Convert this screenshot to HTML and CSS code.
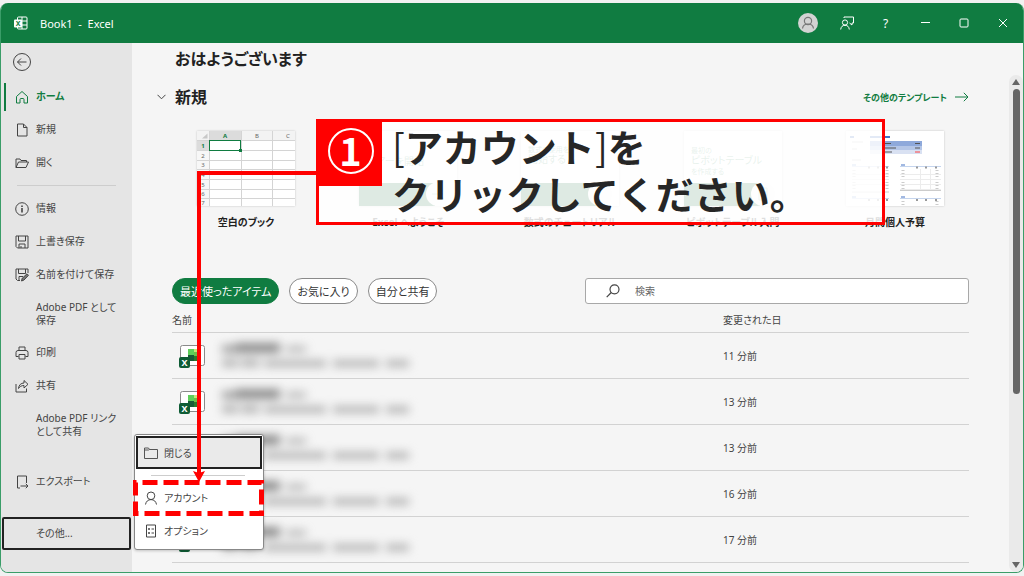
FILE: index.html
```html
<!DOCTYPE html>
<html lang="ja">
<head>
    <meta charset="UTF-8">
    <meta name="viewport" content="width=device-width, initial-scale=1.0">
    <title>Book1 - Excel</title>
    <link rel="stylesheet" href="styles.css">
</head>
<body>
    <!-- Shared symbols for the file list -->
    <svg class="defs" aria-hidden="true">
        <symbol id="file-icon" viewBox="0 0 28 26">
            <rect x="1.5" y="2.5" width="24" height="20" rx="2" fill="#fff" stroke="#8a8a8a"/>
            <rect x="9" y="6" width="6" height="6" fill="#5fcf5a"/>
            <rect x="15" y="6" width="5" height="3" fill="#c5e87a"/>
            <rect x="15" y="9" width="5" height="4" fill="#6fbf4a"/>
            <rect x="9" y="12" width="6" height="6" fill="#185c37"/>
            <rect x="15" y="13" width="5" height="5" fill="#2c7a2c"/>
            <rect x="0" y="14" width="11" height="11" rx="2" fill="#0f5c35"/>
            <text x="5.500" y="23" text-anchor="middle" class="icon-x">X</text>
        </symbol>
        <symbol id="hidden-name" viewBox="0 0 200 34">
            <g fill="#8c8c8c">
                <rect x="6" y="6" width="14" height="8" opacity=".8"/>
                <rect x="20" y="4" width="44" height="10"/>
                <rect x="70" y="7" width="20" height="6" opacity=".6"/>
            </g>
            <g fill="#b4b4b4">
                <rect x="6" y="20" width="16" height="8"/>
                <rect x="25" y="20" width="18" height="8"/>
                <rect x="48" y="21" width="62" height="7"/>
                <rect x="117" y="21" width="46" height="7"/>
                <rect x="170" y="21" width="23" height="7"/>
            </g>
        </symbol>
    </svg>

    <div class="window">
        <header class="titlebar">
            <svg class="app-icon" width="14" height="14" viewBox="0 0 14 14" fill="none" stroke="#fff">
                <path d="M3.500 4V2a1 1 0 0 1 1-1H12a1 1 0 0 1 1 1v10a1 1 0 0 1-1 1H4.500a1 1 0 0 1-1-1v-1M8 1v12M3.500 5H13M8 9h5"/>
                <rect x="0" y="3.500" width="8" height="8" rx="1" fill="#fff" stroke="none"/>
                <text x="4" y="10" text-anchor="middle" class="app-x">X</text>
            </svg>
            <span class="title">Book1&nbsp; -&nbsp; Excel</span>
            <div class="window-buttons">
                <button aria-label="アカウント">
                    <svg width="20" height="20" viewBox="0 0 20 20" fill="none" stroke="#777" stroke-width="1.200">
                        <circle cx="10" cy="10" r="10" fill="#d3d3d3" stroke="none"/>
                        <circle cx="10" cy="8" r="3.600"/>
                        <path d="M4.500 15.500c.4-3 2.300-4.500 5.500-4.500s5.100 1.500 5.500 4.500"/>
                    </svg>
                </button>
                <button aria-label="フィードバック">
                    <svg width="14" height="14" viewBox="0 0 14 14" fill="none" stroke="#fff">
                        <circle cx="5" cy="6.500" r="2.600"/>
                        <path d="M.7 13.500c.3-2.800 1.800-4.200 4.300-4.200s4 1.400 4.300 4.200M4 2V1h9.500v6H12v2L9.500 7"/>
                    </svg>
                </button>
                <button aria-label="ヘルプ">?</button>
                <button aria-label="最小化">
                    <svg width="10" height="10" viewBox="0 0 10 10" stroke="#fff"><path d="M1 4.500h9"/></svg>
                </button>
                <button aria-label="最大化">
                    <svg width="10" height="10" viewBox="0 0 10 10" fill="none" stroke="#fff"><rect x="1" y="1" width="8" height="8" rx="1"/></svg>
                </button>
                <button aria-label="閉じる">
                    <svg width="10" height="10" viewBox="0 0 10 10" stroke="#fff"><path d="M1 1l8 8M9 1L1 9"/></svg>
                </button>
            </div>
        </header>

        <div class="body">
            <nav class="sidebar">
                <button class="back" aria-label="戻る">
                    <svg width="20" height="20" viewBox="0 0 20 20" fill="none" stroke="#444">
                        <circle cx="10" cy="10" r="8.500"/>
                        <path d="M5.500 10h9M9 6.500L5.500 10 9 13.500"/>
                    </svg>
                </button>
                <button class="nav-item active">
                    <svg width="14" height="14" viewBox="0 0 14 14" fill="none" stroke="#107c41">
                        <path d="M1.500 6.500L7 1.500l5.500 5v6.500H9V9.500a1 1 0 0 0-1-1H6a1 1 0 0 0-1 1V13H1.500z"/>
                    </svg>
                    ホーム
                </button>
                <button class="nav-item">
                    <svg width="14" height="14" viewBox="0 0 14 14" fill="none" stroke="#444">
                        <path d="M2.500 1h6l3.500 3.500V13H2.500zM8.500 1v3.500H12"/>
                    </svg>
                    新規
                </button>
                <button class="nav-item">
                    <svg width="14" height="14" viewBox="0 0 14 14" fill="none" stroke="#444">
                        <path d="M1 11.500V3h4l1 1.500h5.500V6M1 11.500L3.500 6h10L11 11.500z"/>
                    </svg>
                    開く
                </button>
                <hr>
                <button class="nav-item">
                    <svg width="14" height="14" viewBox="0 0 14 14" fill="none" stroke="#444">
                        <circle cx="7" cy="7" r="6.300"/>
                        <path d="M7 6v4.500M7 3.500v1.500" stroke-width="1.600"/>
                    </svg>
                    情報
                </button>
                <button class="nav-item">
                    <svg width="14" height="14" viewBox="0 0 14 14" fill="none" stroke="#444">
                        <path d="M1 1h12v12H2.500L1 11.500zM3.500 1v5h7V1M4 13V9h6v4M6 11v2"/>
                    </svg>
                    上書き保存
                </button>
                <button class="nav-item">
                    <svg width="14" height="14" viewBox="0 0 14 14" fill="none" stroke="#444">
                        <path d="M5 12.500H2.500L1 11V1h12v4M3.500 1v4.500h7V1M4 12V8.500h4"/>
                        <path d="M6.500 13l.7-2.700L12 5.800l1.500 1.500-4.600 4.800z" fill="#777"/>
                    </svg>
                    名前を付けて保存
                </button>
                <button class="nav-item tall">Adobe PDF として<br>保存</button>
                <button class="nav-item">
                    <svg width="14" height="14" viewBox="0 0 14 14" fill="none" stroke="#444">
                        <path d="M4 4.500V1h6v3.500M3.500 10.500H1v-4a2 2 0 0 1 2-2h8a2 2 0 0 1 2 2v4h-2.500M4 8.500h6V13H4z"/>
                    </svg>
                    印刷
                </button>
                <button class="nav-item">
                    <svg width="14" height="14" viewBox="0 0 14 14" fill="none" stroke="#444">
                        <path d="M1 5v8h10.500V9.500M3.500 9.500c.3-3.500 2.500-5.500 5.500-5.500V1.500l4 3.800-4 3.700V6.500c-2.500 0-4.300 1-5.500 3z"/>
                    </svg>
                    共有
                </button>
                <button class="nav-item tall">Adobe PDF リンク<br>として共有</button>
                <button class="nav-item export">
                    <svg width="14" height="14" viewBox="0 0 14 14" fill="none" stroke="#444">
                        <path d="M5 13H2.500V1h9v7M5.500 11H13M10.800 8.800L13 11l-2.200 2.200"/>
                    </svg>
                    エクスポート
                </button>
                <div class="more">
                    <button class="nav-item more-button">その他...</button>
                    <div class="menu">
                        <button class="menu-item selected">
                            <svg width="14" height="14" viewBox="0 0 14 14" fill="none" stroke="#555">
                                <path d="M.5 2h4l1 1.500h8v9H.5zM.5 4h4l1-.5"/>
                            </svg>
                            閉じる
                        </button>
                        <hr>
                        <button class="menu-item">
                            <svg width="14" height="14" viewBox="0 0 14 14" fill="none" stroke="#444">
                                <circle cx="7" cy="4.800" r="3.800"/>
                                <path d="M1.500 13.500C2 10.500 4 8.600 7 8.600s5 1.900 5.500 4.900"/>
                            </svg>
                            アカウント
                        </button>
                        <button class="menu-item">
                            <svg width="14" height="14" viewBox="0 0 14 14" fill="none" stroke="#444">
                                <path d="M2.500 1h9v12h-9z"/>
                                <path d="M4 5h2M4 9h2M5 4v2M5 8v2M7.500 5H10M7.500 9H10"/>
                            </svg>
                            オプション
                        </button>
                    </div>
                </div>
            </nav>

            <main class="content">
                <h1>おはようございます</h1>
                <div class="section-head">
                    <button class="toggle" aria-label="新規を折りたたむ">
                        <svg width="9" height="6" viewBox="0 0 9 6" fill="none" stroke="#444"><path d="M.5 .8l4 4 4-4"/></svg>
                    </button>
                    <h2>新規</h2>
                    <a class="more-templates" href="#">その他のテンプレート
                        <svg width="14" height="10" viewBox="0 0 14 10" fill="none" stroke="#107c41"><path d="M0 5h13M8.800 .8L13 5 8.800 9.200"/></svg>
                    </a>
                </div>

                <div class="templates">
                    <a class="template" href="#">
                        <svg class="thumb" viewBox="0 0 98 75">
                            <path d="M0 0h98v9H0z" fill="#f3f3f3"/>
                            <path d="M0 9h12v66H0z" fill="#f7f7f7"/>
                            <path d="M12 0h32v9H12z" fill="#dcdcdc"/>
                            <path d="M0 9h12v10H0z" fill="#dcdcdc"/>
                            <path d="M5 7.500h5.500V2.500z" fill="#c8c8c8"/>
                            <path d="M0 9.500h98M0 19.500h98M0 29.500h98M0 38.500h98M0 48.500h98M0 58.500h98M0 67.500h98M12.500 0v75M44.500 0v75M75.500 0v75" stroke="#d4d4d4"/>
                            <rect x="12.500" y="9.500" width="31" height="10" fill="#fff" stroke="#107c41"/>
                            <rect x="42" y="18" width="3" height="3" fill="#107c41"/>
                            <g class="cell-labels" text-anchor="middle">
                                <text x="28" y="7" class="on">A</text>
                                <text x="60" y="7">B</text>
                                <text x="91" y="7">C</text>
                                <text x="6" y="17" class="on">1</text>
                                <text x="6" y="27">2</text>
                                <text x="6" y="36">3</text>
                                <text x="6" y="46">4</text>
                                <text x="6" y="56">5</text>
                                <text x="6" y="65">6</text>
                                <text x="6" y="74">7</text>
                            </g>
                        </svg>
                        <span>空白のブック</span>
                    </a>
                    <a class="template" href="#">
                        <svg class="thumb" viewBox="0 0 98 75">
                            <path d="M0 52h76v23H0z" fill="#217346"/>
                            <circle cx="79" cy="63" r="12" fill="#f5f5f5"/>
                            <path d="M73 63h11M80 59l4 4-4 4" fill="none" stroke="#9fc5b0"/>
                            <text x="8" y="34" class="cover-text">ツアーを開始</text>
                        </svg>
                        <span>Excel へようこそ</span>
                    </a>
                    <a class="template" href="#">
                        <svg class="thumb" viewBox="0 0 98 75">
                            <path d="M0 52h76v23H0z" fill="#217346"/>
                            <circle cx="79" cy="63" r="12" fill="#f5f5f5"/>
                            <text x="7" y="21" class="cover-small">数式の使用を</text>
                            <text x="7" y="32" class="cover-text">開始する</text>
                        </svg>
                        <span>数式のチュートリアル</span>
                    </a>
                    <a class="template" href="#">
                        <svg class="thumb" viewBox="0 0 98 75">
                            <path d="M0 52h76v23H0z" fill="#217346"/>
                            <circle cx="79" cy="63" r="12" fill="#f5f5f5"/>
                            <path d="M75 57h8v12h-8zM75 61h8M79 57v12" fill="none" stroke="#9fc5b0"/>
                            <text x="7" y="22" class="cover-small">最初の</text>
                            <text x="7" y="33" class="cover-text">ピボットテーブル</text>
                            <text x="7" y="43" class="cover-small">を作成する</text>
                        </svg>
                        <span>ピボットテーブル入門</span>
                    </a>
                    <a class="template" href="#">
                        <svg class="thumb" viewBox="0 0 98 75">
                            <path d="M4 6h4M24 6h20" stroke="#4472c4" stroke-width="2"/>
                            <path d="M24 10h52v5H24z" fill="#8ea9db"/>
                            <path d="M24 15h52v4H24z" fill="#b4c6e7"/>
                            <path d="M24 19h52v4H24z" fill="#d9e1f2"/>
                            <path d="M38 12.500h7M38 17h12M38 21h8M69 12.500h5M69 17h5" stroke="#555"/>
                            <path d="M69 21h5" stroke="#f44"/>
                            <path d="M6 11h11M6 18h5M6 29h9" stroke="#bbb"/>
                            <path d="M6 34h4M55 34h4M6 66h4M55 66h4" stroke="#4472c4"/>
                            <path d="M6 35.500h37M54 35.500h41M6 67.500h37M54 67.500h41" stroke="#c5d5ee"/>
                            <path d="M22 36.500h2M31 36.500h2M40 36.500h2M70 36.500h2M79 36.500h2M89 36.500h2M22 69h2M31 69h2M40 69h2M70 69h2M79 69h2M89 69h2" stroke="#999" stroke-width="2"/>
                            <path d="M8 39v19M41 39v21M57 39v20M91 39v20M57 70v5M91 70v5" stroke="#ccc" stroke-width="3" stroke-dasharray="1 2"/>
                            <path d="M6 43.500h37M6 48.500h37M6 53.500h37M54 43.500h41M54 48.500h41M54 53.500h41M54 58.500h41M74.500 38v21M84.500 38v21" stroke="#ececec"/>
                            <path d="M6 61h37M54 59.500h41" stroke="#ccc"/>
                        </svg>
                        <span>月間個人予算</span>
                    </a>
                </div>

                <div class="toolbar">
                    <button class="pill current">最近使ったアイテム</button>
                    <button class="pill">お気に入り</button>
                    <button class="pill">自分と共有</button>
                    <label class="search">
                        <svg width="14" height="14" viewBox="0 0 14 14" fill="none" stroke="#444" stroke-width="1.200">
                            <circle cx="8.500" cy="5.300" r="4.500"/>
                            <path d="M5.300 8.500L.7 13.200"/>
                        </svg>
                        <input type="search" placeholder="検索" aria-label="検索">
                    </label>
                </div>

                <table class="files">
                    <thead>
                        <tr><th>名前</th><th class="date">変更された日</th></tr>
                    </thead>
                    <tbody>
                        <tr>
                            <td><div class="file"><svg class="file-icon"><use href="#file-icon"/></svg><svg class="hidden-name"><use href="#hidden-name"/></svg></div></td>
                            <td>11 分前</td>
                        </tr>
                        <tr>
                            <td><div class="file"><svg class="file-icon"><use href="#file-icon"/></svg><svg class="hidden-name"><use href="#hidden-name"/></svg></div></td>
                            <td>13 分前</td>
                        </tr>
                        <tr>
                            <td><div class="file"><svg class="file-icon"><use href="#file-icon"/></svg><svg class="hidden-name"><use href="#hidden-name"/></svg></div></td>
                            <td>13 分前</td>
                        </tr>
                        <tr>
                            <td><div class="file"><svg class="file-icon"><use href="#file-icon"/></svg><svg class="hidden-name"><use href="#hidden-name"/></svg></div></td>
                            <td>16 分前</td>
                        </tr>
                        <tr>
                            <td><div class="file"><svg class="file-icon"><use href="#file-icon"/></svg><svg class="hidden-name"><use href="#hidden-name"/></svg></div></td>
                            <td>17 分前</td>
                        </tr>
                    </tbody>
                </table>
            </main>

            <div class="scrollbar">
                <svg width="8" height="6" viewBox="0 0 8 6"><path d="M4 0l4 6H0z" fill="#666"/></svg>
                <div class="scroll-space"><div class="scroll-thumb"></div></div>
                <svg width="8" height="6" viewBox="0 0 8 6"><path d="M0 0h8L4 6z" fill="#666"/></svg>
            </div>
        </div>
    </div>

    <!-- Step callout and its arrow -->
    <div class="callout">
        <div class="step"><span>1</span></div>
        <p><span class="bracket">[</span>アカウント<span class="bracket">]</span>を<br>クリックしてください。</p>
    </div>
    <svg class="arrow" width="124" height="314" viewBox="0 0 124 314">
        <path d="M124 4H7v302" fill="none" stroke="#f00" stroke-width="4"/>
        <path d="M7 313L1 302l6 2 6-2z" fill="#f00"/>
    </svg>
    <svg class="highlight" width="132" height="36" viewBox="0 0 132 36">
        <rect x="2.500" y="2.500" width="126" height="31" fill="none" stroke="#f00" stroke-width="5" stroke-dasharray="15 6" stroke-dashoffset="14"/>
    </svg>
</body>
</html>
```
FILE: styles.css
```css
* {
    box-sizing: border-box;
}

body {
    margin: 0;
    padding: 3px 0;
    min-height: 100vh;
    display: flex;
    flex-direction: column;
    position: relative;
    background: #f1f1f1;
    color: #444;
    font-family: "Noto Sans", "Noto Sans CJK JP", sans-serif;
    font-size: 10px;
    font-feature-settings: "palt";
}

button {
    font: inherit;
    color: inherit;
    background: none;
    border: none;
    padding: 0;
    cursor: pointer;
}

svg {
    flex-shrink: 0;
}

a {
    color: inherit;
    text-decoration: none;
}

hr {
    border: none;
    border-top: 1px solid #cdcdcd;
}

.defs {
    position: absolute;
    width: 0;
    height: 0;
}

.window {
    flex: 1;
    display: flex;
    flex-direction: column;
    border: 1px solid #3a9d68;
    border-top: none;
    border-radius: 8px;
    background: #f5f5f5;
}

/* Title bar */
.titlebar {
    display: flex;
    align-items: center;
    height: 40px;
    padding: 0 1px 0 13px;
    background: #107c41;
    color: #fff;
    border-radius: 7px 7px 0 0;
    font-size: 11px;
}

.title {
    margin-left: 12px;
}

.app-x {
    font-size: 7px;
    font-weight: bold;
    fill: #107c41;
    stroke: none;
}

.window-buttons {
    display: flex;
    margin-left: auto;
}

.window-buttons button {
    width: 39px;
    height: 40px;
    display: flex;
    align-items: center;
    justify-content: center;
    font-size: 12px;
}

.body {
    flex: 1;
    display: flex;
}

/* Sidebar */
.sidebar {
    width: 131px;
    display: flex;
    flex-direction: column;
    background: #e5e5e5;
    border-radius: 0 0 0 7px;
}

.sidebar hr {
    width: 99px;
    margin: 6px 16px;
}

.back {
    height: 37px;
    padding-left: 11px;
    display: flex;
    align-items: center;
}

.nav-item {
    display: flex;
    align-items: center;
    gap: 7px;
    height: 33px;
    padding-left: 14px;
    line-height: 13px;
    text-align: left;
}

.nav-item.active {
    color: #107c41;
    font-weight: bold;
}

.nav-item.active::before {
    content: "";
    width: 2px;
    height: 28px;
    margin: 0 2px 0 -11px;
    background: #107c41;
}

.nav-item.tall {
    height: 45px;
    padding-left: 35px;
}

.nav-item.export {
    margin-top: 18px;
}

.more {
    position: relative;
    margin: 19px 1px 0;
}

.more-button {
    width: 100%;
    padding-left: 32px;
    border: 2px solid #222;
    border-radius: 2px;
}

.menu {
    position: absolute;
    left: calc(100% + 3px);
    bottom: 0;
    width: 130px;
    z-index: 2;
    display: flex;
    flex-direction: column;
    padding: 1px 1px 2px;
    background: #fff;
    border: 1px solid #888;
    border-radius: 3px;
    box-shadow: 0 1px 3px rgba(0, 0, 0, 0.2);
}

.menu hr {
    width: 94px;
    margin: 6px auto 5px 15px;
}

.menu-item {
    display: flex;
    align-items: center;
    gap: 6px;
    height: 33px;
    padding-left: 8px;
}

.menu-item.selected {
    padding-left: 6px;
    background: #eaeaea;
    border: 2px solid #222;
}

/* Main area */
.content {
    flex: 1;
    padding: 0 40px;
}

h1,
h2 {
    margin: 0;
    color: #222;
    font-size: 16px;
    line-height: 32px;
}

h1 {
    padding-left: 3px;
}

.section-head {
    display: flex;
    align-items: center;
    gap: 9px;
    margin: 6px 0 18px -15px;
}

.toggle {
    display: flex;
}

.more-templates {
    display: flex;
    align-items: center;
    gap: 8px;
    margin-left: auto;
    color: #107c41;
    font-size: 9px;
    font-weight: bold;
}

.templates {
    display: grid;
    grid-template-columns: repeat(5, 1fr);
    margin: 0 -7px;
}

.template {
    display: flex;
    flex-direction: column;
    align-items: center;
    gap: 8px;
    color: #222;
    font-weight: bold;
    line-height: 16px;
}

.thumb {
    width: 98px;
    height: 75px;
    background: #fff;
    box-shadow: 0 0 2px rgba(0, 0, 0, 0.2);
}

.cell-labels {
    font-size: 6px;
    font-weight: normal;
    fill: #666;
}

.cell-labels .on {
    font-weight: bold;
    fill: #107c41;
}

.cover-text,
.cover-small {
    font-weight: normal;
    fill: #6ba585;
}

.cover-text {
    font-size: 10px;
}

.cover-small {
    font-size: 7px;
}

.toolbar {
    display: flex;
    gap: 10px;
    margin-top: 48px;
}

.pill {
    height: 26px;
    padding: 0 7px;
    border: 1px solid #8a8a8a;
    border-radius: 13px;
    background: #fff;
    color: #333;
    font-size: 11px;
}

.pill.current {
    background: #107c41;
    border-color: #107c41;
    color: #fff;
}

.search {
    display: flex;
    align-items: center;
    gap: 15px;
    width: 384px;
    height: 26px;
    margin-left: auto;
    padding-left: 20px;
    background: #fff;
    border: 1px solid #a8a8a8;
    border-radius: 3px;
}

.search input {
    flex: 1;
    border: none;
    outline: none;
    padding: 0;
    background: none;
    font: inherit;
}

.search input::placeholder {
    color: #666;
}

/* File list */
.files {
    width: 100%;
    border-collapse: separate;
    border-spacing: 0;
}

.files th {
    height: 29px;
    padding: 3px 0 0;
    font-weight: normal;
    text-align: left;
    border-bottom: 1px solid #d2d2d2;
}

.files .date {
    width: 246px;
}

.files td {
    height: 46px;
    padding: 0;
    border-bottom: 1px solid #d2d2d2;
}

.file {
    display: flex;
    align-items: center;
    gap: 9px;
    padding-left: 7px;
}

.file-icon {
    width: 28px;
    height: 26px;
}

.icon-x {
    font-size: 9px;
    font-weight: bold;
    fill: #fff;
}

.hidden-name {
    width: 200px;
    height: 34px;
    filter: blur(5px);
}

/* Scrollbar */
.scrollbar {
    display: flex;
    flex-direction: column;
    align-items: center;
    gap: 4px;
    width: 14px;
    margin-top: 32px;
    padding: 4px 0;
    background: #eaeaea;
    border-radius: 7px;
}

.scroll-space {
    flex: 1;
}

.scroll-thumb {
    width: 7px;
    height: 65%;
    background: #666;
    border-radius: 4px;
}

/* Annotation layer */
.callout {
    position: absolute;
    left: 316px;
    top: 119px;
    z-index: 3;
    display: flex;
    width: 569px;
    height: 106px;
    border: 3px solid #f00;
    background: rgba(255, 255, 255, 0.85);
    color: #262626;
}

.step {
    display: flex;
    justify-content: center;
    width: 63px;
    height: 64px;
    padding-top: 6px;
    background: #f00;
}

.step span {
    width: 46px;
    height: 46px;
    border: 2px solid #fff;
    border-radius: 50%;
    color: #fff;
    font-family: "Noto Sans CJK JP", sans-serif;
    font-size: 38px;
    font-weight: bold;
    line-height: 40px;
    text-align: center;
}

.callout p {
    margin: 0 0 0 10px;
    font-family: "Noto Sans CJK JP", sans-serif;
    font-size: 38px;
    font-weight: bold;
    font-feature-settings: normal;
    line-height: 47px;
    white-space: nowrap;
}

.bracket {
    font-weight: normal;
}

.arrow {
    position: absolute;
    left: 192px;
    top: 169px;
    z-index: 4;
}

.highlight {
    position: absolute;
    left: 133px;
    top: 480px;
    z-index: 4;
}
```
